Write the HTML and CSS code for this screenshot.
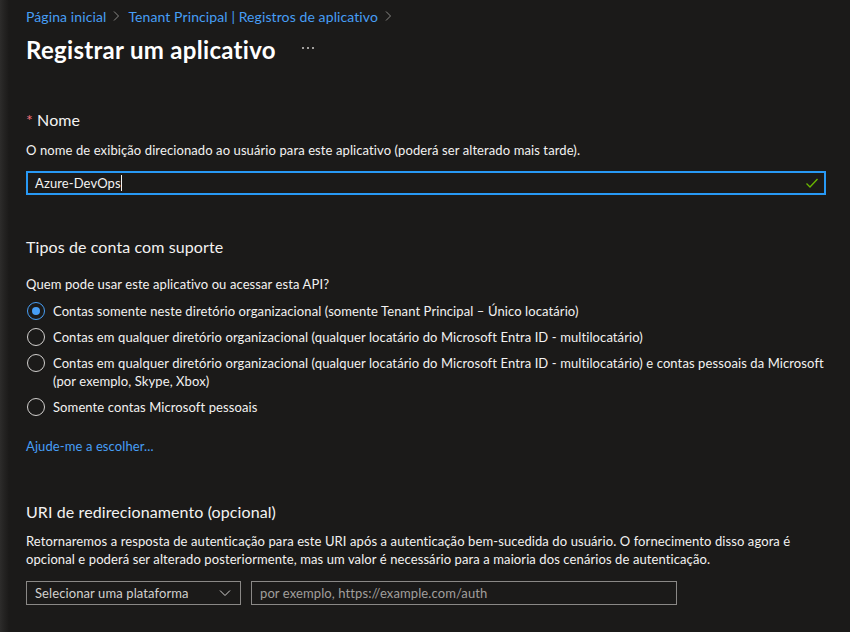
FILE: index.html
```html
<!DOCTYPE html>
<html lang="pt-BR">
<head>
<meta charset="utf-8">
<title>Registrar um aplicativo</title>
<link rel="stylesheet" href="styles.css">
</head>
<body>
<div class="page">
  <nav class="crumbs">
    <a class="crumb">Página inicial</a>
    <span class="sep"><svg width="6" height="10" viewBox="0 0 6 10"><path d="M1 0.5l4.5 4.5-4.5 4.5" fill="none" stroke="#8a8886" stroke-width="1"/></svg></span>
    <a class="crumb">Tenant Principal | Registros de aplicativo</a>
    <span class="sep"><svg width="6" height="10" viewBox="0 0 6 10"><path d="M1 0.5l4.5 4.5-4.5 4.5" fill="none" stroke="#8a8886" stroke-width="1"/></svg></span>
  </nav>
  <header class="titlebar">
    <h1 class="title">Registrar um aplicativo</h1>
    <svg class="more" width="13" height="2" viewBox="0 0 13 2" aria-label="Mais"><rect x="0" y="0" width="2" height="2" fill="#a19f9d"/><rect x="5" y="0" width="2" height="2" fill="#a19f9d"/><rect x="10" y="0" width="2" height="2" fill="#a19f9d"/></svg>
  </header>

  <section class="sec sec-name">
    <h2 class="label"><span class="req">*</span> Nome</h2>
    <p class="desc">O nome de exibição direcionado ao usuário para este aplicativo (poderá ser alterado mais tarde).</p>
    <div class="field focused">
      <span class="value">Azure-DevOps</span><span class="caret"></span>
      <svg class="check" width="14" height="12" viewBox="0 0 14 12"><path d="M1.5 6.5l3.5 3.5 7.5-8" fill="none" stroke="#6bb700" stroke-width="1.3"/></svg>
    </div>
  </section>

  <section class="sec sec-types">
    <h2 class="label">Tipos de conta com suporte</h2>
    <p class="desc q">Quem pode usar este aplicativo ou acessar esta API?</p>
    <ul class="radios">
      <li class="radio checked"><span class="dot"></span><span class="rtext">Contas somente neste diretório organizacional (somente Tenant Principal – Único locatário)</span></li>
      <li class="radio"><span class="dot"></span><span class="rtext">Contas em qualquer diretório organizacional (qualquer locatário do Microsoft Entra ID - multilocatário)</span></li>
      <li class="radio"><span class="dot"></span><span class="rtext">Contas em qualquer diretório organizacional (qualquer locatário do Microsoft Entra ID - multilocatário) e contas pessoais da Microsoft (por exemplo, Skype, Xbox)</span></li>
      <li class="radio"><span class="dot"></span><span class="rtext">Somente contas Microsoft pessoais</span></li>
    </ul>
    <a class="link help">Ajude-me a escolher...</a>
  </section>

  <section class="sec sec-uri">
    <h2 class="label">URI de redirecionamento (opcional)</h2>
    <p class="desc para">Retornaremos a resposta de autenticação para este URI após a autenticação bem-sucedida do usuário. O fornecimento disso agora é opcional e poderá ser alterado posteriormente, mas um valor é necessário para a maioria dos cenários de autenticação.</p>
    <div class="uri-row">
      <div class="select"><span>Selecionar uma plataforma</span>
        <svg width="12" height="8" viewBox="0 0 12 8"><path d="M1 1.5l5 5 5-5" fill="none" stroke="#d2d0ce" stroke-width="1"/></svg>
      </div>
      <div class="uri-input">por exemplo, https://example.com/auth</div>
    </div>
  </section>
</div>
</body>
</html>
```
FILE: styles.css
```css
html, body {
  margin: 0;
  padding: 0;
  height: 100%;
}
body {
  background: #1b1a19;
  color: #f3f2f1;
  font-family: "Lato", "Open Sans", sans-serif;
  font-size: 13px;
  letter-spacing: 0.1px;
  overflow: hidden;
}
.page {
  min-height: 100%;
  padding: 0 20px 0 26px;
  background: linear-gradient(to right, #2d2c2b 0, #262524 3px, #1b1a19 9px);
  box-sizing: border-box;
}
.crumbs {
  display: flex;
  align-items: center;
  height: 32px;
}
.crumb {
  color: #479ef5;
  font-size: 14px;
  letter-spacing: 0.1px;
}
.sep {
  display: inline-flex;
  margin: 0 9px 0 7px;
}
.titlebar {
  display: flex;
  align-items: center;
  height: 34px;
}
.title {
  margin: 0;
  font-size: 24px;
  font-weight: 700;
  color: #ffffff;
  letter-spacing: 0.3px;
}
.more {
  margin-left: 26px;
  margin-top: -2px;
}
.sec-name { margin-top: 43px; }
.label {
  margin: 0;
  font-size: 16px;
  font-weight: 400;
  line-height: 22px;
  color: #f3f2f1;
}
.req { color: #f1707b; }
.desc {
  margin: 10px 0 0;
  line-height: 18px;
}
.field {
  margin-top: 12px;
  margin-right: 4px;
  height: 24px;
  box-sizing: border-box;
  border: 2px solid #2899f5;
  display: flex;
  align-items: center;
  padding: 0 5px 0 7px;
}
.value { color: #f3f2f1; }
.caret {
  width: 1px;
  height: 16px;
  background: #f3f2f1;
}
.check { margin-left: auto; }

.sec-types { margin-top: 41px; }
.q { margin-top: 17px; }
.radios {
  list-style: none;
  margin: 9px 0 0;
  padding: 0;
  display: flex;
  flex-direction: column;
  gap: 8px;
}
.radio {
  display: flex;
  align-items: flex-start;
  line-height: 18px;
}
.dot {
  flex: none;
  width: 18px;
  height: 18px;
  box-sizing: border-box;
  border: 1px solid #d2d0ce;
  border-radius: 50%;
  margin: 0 8px 0 1px;
  position: relative;
}
.checked .dot { border-color: #479ef5; }
.checked .dot::after {
  content: "";
  position: absolute;
  left: 4px; top: 4px;
  width: 8px; height: 8px;
  border-radius: 50%;
  background: #479ef5;
}
.link {
  color: #479ef5;
}
.help {
  display: block;
  margin-top: 21px;
  line-height: 18px;
}
.sec-uri { margin-top: 46px; }
.para { margin-top: 9px; padding-right: 20px; }
.uri-row {
  display: flex;
  gap: 10px;
  margin-top: 13px;
}
.select {
  width: 215px;
  height: 24px;
  box-sizing: border-box;
  border: 1px solid #8a8886;
  display: flex;
  align-items: center;
  justify-content: space-between;
  padding: 0 9px 0 8px;
  color: #d2d0ce;
}
.uri-input {
  width: 426px;
  height: 24px;
  box-sizing: border-box;
  border: 1px solid #8a8886;
  display: flex;
  align-items: center;
  padding: 0 8px;
  color: #a19f9d;
}
```
